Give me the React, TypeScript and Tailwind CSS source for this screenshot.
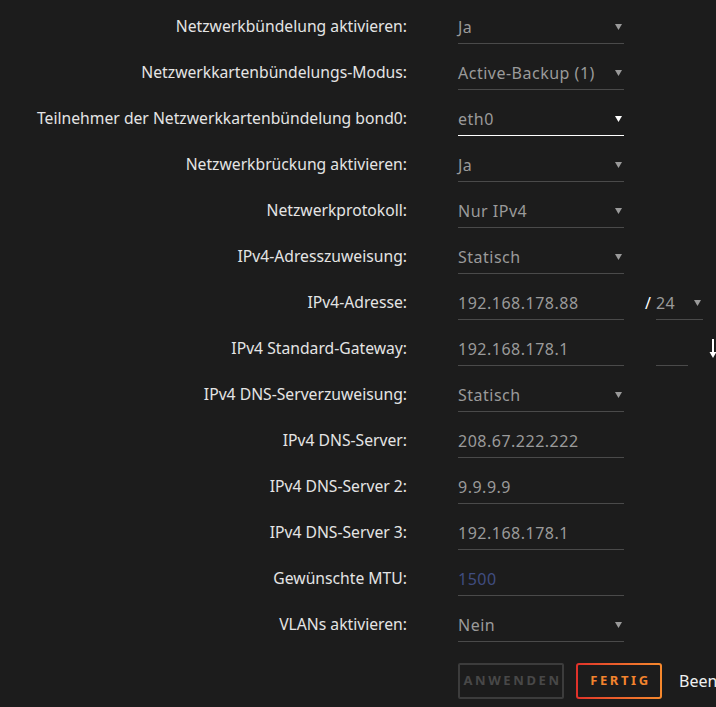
import React, { FC } from 'react';

type Row =
  | { label: string; kind: 'select'; value: string; active?: boolean }
  | { label: string; kind: 'input'; value: string; placeholder?: boolean }
  | { label: string; kind: 'ip'; value: string }
  | { label: string; kind: 'gateway'; value: string };

const rows: Row[] = [
  { label: 'Netzwerkbündelung aktivieren:', kind: 'select', value: 'Ja' },
  { label: 'Netzwerkkartenbündelungs-Modus:', kind: 'select', value: 'Active-Backup (1)' },
  { label: 'Teilnehmer der Netzwerkkartenbündelung bond0:', kind: 'select', value: 'eth0', active: true },
  { label: 'Netzwerkbrückung aktivieren:', kind: 'select', value: 'Ja' },
  { label: 'Netzwerkprotokoll:', kind: 'select', value: 'Nur IPv4' },
  { label: 'IPv4-Adresszuweisung:', kind: 'select', value: 'Statisch' },
  { label: 'IPv4-Adresse:', kind: 'ip', value: '192.168.178.88' },
  { label: 'IPv4 Standard-Gateway:', kind: 'gateway', value: '192.168.178.1' },
  { label: 'IPv4 DNS-Serverzuweisung:', kind: 'select', value: 'Statisch' },
  { label: 'IPv4 DNS-Server:', kind: 'input', value: '208.67.222.222' },
  { label: 'IPv4 DNS-Server 2:', kind: 'input', value: '9.9.9.9' },
  { label: 'IPv4 DNS-Server 3:', kind: 'input', value: '192.168.178.1' },
  { label: 'Gewünschte MTU:', kind: 'input', value: '1500', placeholder: true },
  { label: 'VLANs aktivieren:', kind: 'select', value: 'Nein' },
];

const Caret: FC<{ white?: boolean }> = ({ white }) => (
  <svg width="7" height="6" viewBox="0 0 7 6" className="shrink-0">
    <path d="M0 0 H7 L3.5 6 Z" fill={white ? '#ffffff' : '#9a9a9a'} />
  </svg>
);

const valueCls = 'text-[16px] tracking-[0.5px] whitespace-nowrap';

const Field: FC<{ row: Row }> = ({ row }) => {
  if (row.kind === 'select') {
    return (
      <div
        className={`w-[166px] h-[34px] shrink-0 flex items-center justify-between border-b ${
          row.active ? 'border-white' : 'border-[#4a4a4a]'
        }`}
      >
        <span className={`${valueCls} text-[#9a9a9a]`}>{row.value}</span>
        <span className="pr-[2px]">
          <Caret white={row.active} />
        </span>
      </div>
    );
  }
  if (row.kind === 'input') {
    return (
      <div className="w-[166px] h-[34px] shrink-0 flex items-center border-b border-[#4a4a4a]">
        <span className={`${valueCls} ${row.placeholder ? 'text-[#404d80]' : 'text-[#9a9a9a]'}`}>
          {row.value}
        </span>
      </div>
    );
  }
  if (row.kind === 'ip') {
    return (
      <div className="flex items-center">
        <div className="w-[166px] h-[34px] shrink-0 flex items-center border-b border-[#4a4a4a]">
          <span className={`${valueCls} text-[#9a9a9a]`}>{row.value}</span>
        </div>
        <span className="ml-[21px] text-[16px] text-white">/</span>
        <div className="ml-[5px] w-[47px] h-[34px] shrink-0 flex items-center justify-between border-b border-[#4a4a4a]">
          <span className={`${valueCls} text-[#9a9a9a]`}>24</span>
          <span className="pr-[2px]">
            <Caret />
          </span>
        </div>
      </div>
    );
  }
  return (
    <div className="flex items-center">
      <div className="w-[166px] h-[34px] shrink-0 flex items-center border-b border-[#4a4a4a]">
        <span className={`${valueCls} text-[#9a9a9a]`}>{row.value}</span>
      </div>
      <div className="ml-[32px] w-[32px] h-[34px] shrink-0 border-b border-[#4a4a4a]" />
      <svg width="8" height="20" viewBox="0 0 8 20" className="ml-[21px] shrink-0">
        <path d="M4 0 V15" stroke="#ffffff" strokeWidth="2" />
        <path d="M0.5 13 H7.5 L4 19 Z" fill="#ffffff" />
      </svg>
    </div>
  );
};

export default function App() {
  return (
    <div
      className="w-[716px] h-[707px] overflow-hidden bg-[#1c1c1c] text-[15.7px]"
      style={{ fontFamily: '"Noto Sans", "Open Sans", sans-serif' }}
    >
      <div className="pt-[4px] flex flex-col">
        {rows.map((row) => (
          <div key={row.label} className="h-[46px] flex items-center">
            <div className="w-[407px] shrink-0 text-right text-[#e4e4e4] whitespace-nowrap">{row.label}</div>
            <div className="ml-[51px] shrink-0">
              <Field row={row} />
            </div>
          </div>
        ))}
        <div className="mt-[15px] ml-[458px] flex items-center whitespace-nowrap">
          <button className="w-[106px] h-[36px] shrink-0 border-2 border-[#3c3c3c] rounded-[2px] text-[13px] font-bold tracking-[0.2em] text-[#484848] pl-[3px]">
            ANWENDEN
          </button>
          <div className="ml-[12px] shrink-0 p-[2px] rounded-[3px] bg-gradient-to-r from-[#e0302a] to-[#f6892d]">
            <div className="w-[82px] h-[32px] rounded-[1px] bg-[#1c1c1c] flex items-center justify-center">
              <span className="text-[13px] font-bold tracking-[0.2em] text-[#f3842e] pl-[3px]">FERTIG</span>
            </div>
          </div>
          <span className="ml-[17px] shrink-0 text-[16px] text-[#f0f0f0]">Beenden</span>
        </div>
      </div>
    </div>
  );
}
